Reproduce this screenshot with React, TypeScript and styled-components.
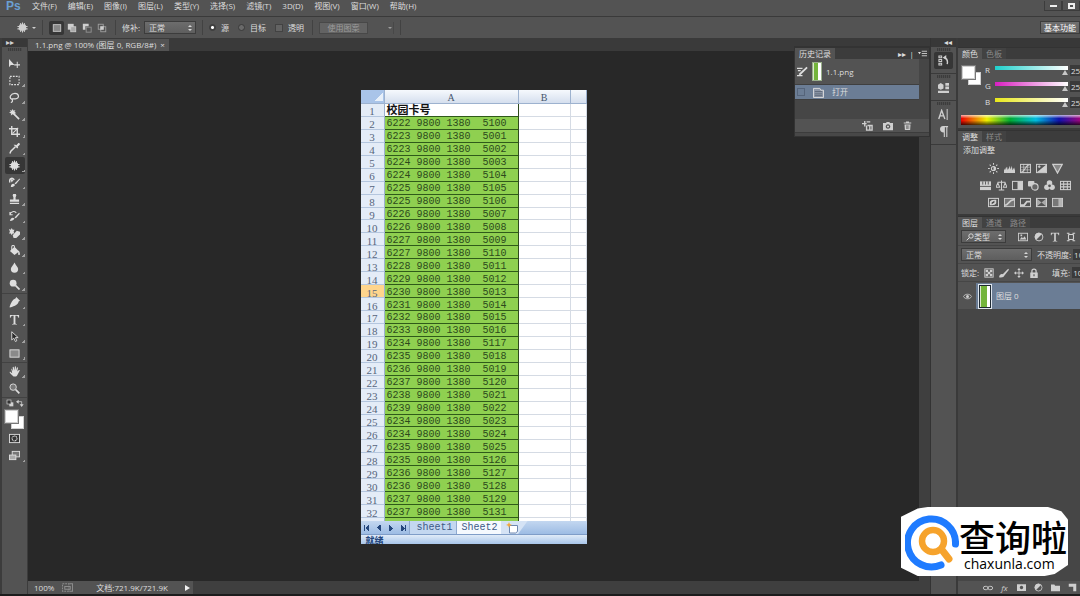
import React from "react";
import styled, { createGlobalStyle, css } from "styled-components";

const Global = createGlobalStyle`
  * { box-sizing: border-box; }
  body { margin: 0; background: #282828; overflow: hidden; }
  body, button, input, select {
    font-family: "Open Sans", "Noto Sans CJK SC", sans-serif;
    font-size: 8px;
    line-height: 10px;
    color: #dedede;
  }
  button, input, select { margin: 0; padding: 0; border: 0; background: none; border-radius: 0; }
`;

const Shell = styled.div`
  display: flex;
  flex-direction: column;
  height: 100vh;
  background: #535353;
  border-bottom: 2px solid #1c1c1c;
  overflow: hidden;
`;

/* ---------- icons ---------- */

const S = { fill: "none", stroke: "currentColor", strokeWidth: 1.1 } as const;
const F = { fill: "currentColor" } as const;

const icons: Record<string, React.ReactNode> = {
  move: <><path {...F} d="M0 1v9l2-2.4h4z" /><path {...S} d="M9 4v7M5.7 7.5h6.6" /></>,
  marquee: <rect {...S} x="1" y="1.5" width="10" height="9" strokeDasharray="2 1.2" />,
  lasso: <path {...S} strokeWidth="1.3" d="M3 8C-.5 6 2 1.500 6.500 1.500S12 7 7 7.500C4 8 2.500 6.500 3.500 8.500S3 11 2 11.500" />,
  wand: <><path {...F} d="M4 0l1 2 2-1-1 2 2 1.500-2 .5 0 2-1.500-1.500L2 7l.5-2L0 4l2-1-1-2 2 1z" /><path {...S} strokeWidth="1.800" d="M5 5l6 6" /></>,
  crop: <><path {...S} strokeWidth="1.500" d="M3 0v9h9M0 3h9v9" /><path {...S} d="M4 8l6-6" /></>,
  eyedropper: <><path {...F} d="M7 2l1 .5L10 .2c1-.8 2.500.8 1.700 1.700L9.500 4l.5 1-1 1-4-4z" /><path {...S} strokeWidth="1.600" d="M7 4L2 9l-1 2.500" /></>,
  patch: <><rect {...F} x="2" y="2.500" width="8" height="7" rx="2.500" /><path {...S} d="M4 1v10M6 .5v11M8 1v10M.5 5h11M.5 7.500h11" /></>,
  healing: <><path {...S} strokeWidth="1.500" d="M1 6C-.5 1 5 0 5.500 3.500" /><path {...F} d="M1 2l4 1-2 3zM2 11c0-4 3-4 4-3s0 3-4 3zM6 7l5.500-5.500.5 1L7.500 8z" /></>,
  stamp: <path {...F} d="M4.500 0h3l.5 1.500-.8 2V6H11v2.500H1V6h3.800V3.500l-.8-2zM1 9.500h10V11H1z" />,
  historyBrush: <><path {...S} d="M1 4C2 0 6 0 8 2M1 1v3h3" /><path {...F} d="M1 11c1-4 3-4 5-3-1 2-2 3-5 3zM6 7l5-5 .8 1L7.500 8z" /></>,
  eraser: <><path {...F} d="M0 1l2 1 1-2 1 2 2 0-1 2 1 2-2 0-1 2-1-2-2 0 1-2z" /><path {...F} d="M4 8l4.500-5 3.500 1v3L8 11H5z" /></>,
  bucket: <><path {...F} d="M1 6.500L6 2l5 5-5 4zM10.500 6c1.500 2 2 5 .5 5s-1-3-.5-5z" /><path {...S} d="M3 6V2c0-2 3-2 3 0v3" /></>,
  drop: <path {...F} d="M6 .5c1 2.500 4 5 4 7.200a4 4 0 0 1-8 0C2 5.500 5 3 6 .5z" />,
  dodge: <><circle {...F} cx="4.500" cy="4.500" r="3.700" /><path {...S} strokeWidth="1.800" d="M7 7l4.500 4.500" /></>,
  pen: <><path {...F} d="M8 0l4 4-1.500 1C10 8 7 10 1 11.500L.5 11 3.500 7.500c-.5-.9.9-1.800 1.500-.9s-.4 1.800-1 1.300L.6 11C2 6 4 2.500 7 1.500z" /></>,
  type: <path {...F} d="M1 1h10v3h-.8C10 2.300 9.300 1.900 7 1.900V10c0 .5.500.8 1.700.9v.6H3.300v-.6C4.500 10.800 5 10.500 5 10V1.900c-2.300 0-3 .4-3.200 2.100H1z" />,
  select: <path fill="#2a2a2a" stroke="currentColor" d="M3 .8v9l2.200-2L7 11.500l1.500-.8L7 7.200l3 0z" />,
  shape: <rect fill="#8a8a8a" stroke="currentColor" x="1" y="2" width="10" height="8" />,
  hand: <path {...F} d="M2.500 3c1-.5 1.500 1.500 2 2.500L4 1.500C4 .5 5.200.5 5.300 1.500L6 5l.3-4c.1-1 1.300-1 1.300 0V5l.9-3c.4-1 1.500-.6 1.300.3L9 6l1.500-1.500c.8-.6 1.500 0 1.100.8L9 10c-.4 1-1 1.500-2.500 1.500S4.500 11 4 10.500L1 7.500c-.8-.9.2-1.500 1-.8L3.500 8z" />,
  zoom: <><circle fill="#777" stroke="currentColor" cx="4.500" cy="4.500" r="3.500" /><path {...S} strokeWidth="1.800" d="M7.300 7.300l4 4" /></>,
  defaults: <><rect {...F} x="5" y="5" width="6" height="6" /><rect fill="#333" stroke="currentColor" x="1.500" y="1.500" width="6" height="6" /></>,
  swap: <><path {...S} d="M2 4h6.500v6" /><path {...F} d="M4 1v6L0 4zM5.500 8h6L8.500 12z" /></>,
  mask: <><rect fill="#333" stroke="currentColor" x=".5" y="1.500" width="11" height="9" /><circle {...S} cx="6" cy="6" r="2.700" strokeDasharray="1.500 .5" /></>,
  screen: <><rect fill="#777" stroke="currentColor" x="3.500" y="1.500" width="8" height="6" /><rect fill="#aaa" stroke="currentColor" x=".5" y="5.500" width="7" height="5" /></>,
  sqNew: <rect fill="#888" stroke="currentColor" x="1.500" y="2" width="9" height="8" />,
  sqAdd: <><rect {...F} x="1" y="1" width="7" height="7" /><rect fill="#aaa" stroke="currentColor" x="4.500" y="4.500" width="6" height="6" /></>,
  sqSub: <><path {...F} d="M1 1h7v3H4v4H1z" /><rect {...S} x="5" y="5" width="6" height="6" opacity=".5" /></>,
  sqInt: <><rect {...S} x="1.500" y="1.500" width="6" height="6" opacity=".6" /><rect {...S} x="4.500" y="4.500" width="6" height="6" opacity=".6" /><path {...F} d="M4 4h4v4H4z" /></>,
  historyPanel: <><path {...S} d="M1 1h3v2H1zM1 5h3v2H1zM1 9h3v2H1z" /><path {...S} strokeWidth="1.500" d="M10 10c1-4 0-6-3-7" /><path {...F} d="M5 3l4-3v5z" /></>,
  miniBridge: <><path {...F} d="M0 3l3-2 3 2v4L3 8.500 0 7zM8 1h4v3H8zM8 5h4v3H8zM0 9.500h12V12H0z" /></>,
  character: <><path {...S} strokeWidth="1.500" d="M.8 11L4 1.500 7.500 11M2 7.500h4" /><path {...S} d="M10 0v12" /></>,
  paragraph: <path {...F} d="M5.500 0H11v1.300h-.8V12H9V1.300H7.500V12H6.300V7C1 7 1 0 5.500 0z" />,
  source: <><path {...S} strokeWidth="1.300" d="M0 2.500h6M1 5h3M0 10.500h6" /><path {...S} strokeWidth="2" d="M2.500 9.500L11 1.500" /></>,
  stateDoc: <><path fill="#8d97a8" stroke="currentColor" d="M.5 11.500v-10h7l1 2h3v8z" /><path stroke="#5b6675" d="M2 5h8M2 7.500h8M2 9.500h8" /></>,
  newDoc: <><path {...S} strokeWidth="1.500" d="M0 4h5M3 1v6M5 2h4M6 6h5v5H5V6M8.500 6v5" /></>,
  camera: <path {...F} fillRule="evenodd" d="M0 2.500h3.500l1-1.200h3l1 1.200H12V11H0zM6 4a2.700 2.700 0 1 0 .01 0zM6 5.300a1.300 1.300 0 1 1-.01 0z" />,
  trash: <path {...F} fillRule="evenodd" d="M1 2h3V.8h4V2h3v1.300H1zM2 4.500h8L9.500 12h-7zM4 5.500v5h.7v-5zM5.700 5.500v5h.7v-5zM7.500 5.500v5h.7v-5z" />,
  brightness: <><circle {...S} cx="6" cy="6" r="2.300" /><path {...F} d="M6 3.700a2.300 2.300 0 0 1 0 4.600z" /><path {...S} d="M6 0v2M6 10v2M0 6h2M10 6h2M1.800 1.800l1.300 1.300M8.900 8.900l1.300 1.300M1.800 10.200l1.300-1.300M8.900 3.100l1.300-1.300" /></>,
  levels: <path {...F} d="M0 11V8l1-2v2l1.500-4L4 8V4l1 3 1.200-4 1 4L8.500 3l.8 5L11 5l1 3v3z" />,
  curves: <><rect {...S} x=".5" y="1.500" width="11" height="9" /><path {...S} strokeWidth=".7" d="M4 1v10M8 1v10M0 4.500h12M0 7.500h12" /><path {...S} d="M1 10c5 0 4-8 10-8" /></>,
  exposure: <><rect {...S} x=".5" y="1.500" width="11" height="9" /><path {...F} d="M1 10L11 2v8z" /><path {...S} d="M2 4h3M3.500 2.500v3" /></>,
  vibrance: <path fill="#888" stroke="currentColor" strokeWidth="1.300" d="M.8 1.500h10.400L6 11z" />,
  hue: <><rect {...F} x="0" y="1.500" width="12" height="9.500" /><path stroke="#555" d="M0 7h12M3 1.500V5M6 1.500V5M9 1.500V5" /></>,
  balance: <><path {...S} d="M6 .5V11M2 2.500h8M3 11h6M0 8l2-5 2 5zM8 8l2-5 2 5z" /></>,
  bw: <><rect {...S} x=".5" y="1.500" width="11" height="9" /><path {...F} d="M6 1.500h5.500v9H6z" /></>,
  photoFilter: <><rect {...F} x="0" y="1" width="7" height="6" rx="1" /><circle fill="#666" stroke="currentColor" strokeWidth="1.300" cx="7.500" cy="7.500" r="3.500" /></>,
  mixer: <><circle {...F} cx="6" cy="3.300" r="3" /><circle {...F} cx="3.200" cy="8" r="3" /><circle {...F} cx="8.800" cy="8" r="3" /><circle cx="6" cy="6.400" r="1.500" fill="#535353" /></>,
  lookup: <><rect {...S} x=".5" y="1.500" width="11" height="9" /><path {...S} d="M0 4.500h12M0 7.500h12M4 1v10M8 1v10" /></>,
  invert: <><rect {...S} x=".5" y="1.500" width="11" height="9" /><path {...F} d="M2 9V6c0-3 4-3 7-3v3c0 3-4 3-7 3z" /><path fill="#444" d="M4 8V6l3-2v2z" /></>,
  posterize: <><rect fill="#777" stroke="currentColor" x=".5" y="1.500" width="11" height="9" /><path {...S} strokeWidth="1.800" d="M1 9c4 0 4-6 10-6" /></>,
  threshold: <><rect {...S} x=".5" y="1.500" width="11" height="9" /><path {...F} d="M1 10V8h3l3-4h4v2H8l-3 4z" /></>,
  selective: <><rect {...S} x=".5" y="1.500" width="11" height="9" /><path {...F} d="M0 1l6 5 6-5v10L6 6l-6 5z" opacity=".7" /></>,
  gradientMap: <><rect fill="#777" stroke="currentColor" x=".5" y="1.500" width="11" height="9" /><path {...F} opacity=".7" d="M7 2h4v8H7z" /></>,
  image: <><rect {...S} x=".5" y="1.500" width="11" height="9" /><path {...F} d="M2 9l2.500-3L6 7.500 8 5l2 4zM3 3h2v2H3z" /></>,
  halfCircle: <><circle {...S} cx="6" cy="6" r="4.700" /><path {...F} d="M9.300 2.700A4.700 4.700 0 1 0 2.700 9.300z" /></>,
  vector: <path {...S} strokeWidth="1.300" d="M3 3h6M3 9h6M3 3v6M9 3v6M1 1.500h2.500V4M8.500 4V1.500H11M1 10.500h2.500V8M8.500 8v2.500H11" />,
  checker: <><rect {...S} x="1" y="1" width="10" height="10" /><path {...F} d="M2 2h3v3H2zM7 2h3v3H7zM4.500 4.500h3v3h-3zM2 7h3v3H2zM7 7h3v3H7z" /></>,
  brush: <path {...F} d="M0 11c1-4 3-4 4.500-3.500L11 1l1 1-5.500 7C6 11 3 12 0 11z" />,
  cross: <><path {...S} d="M6 1v10M1 6h10" /><path {...F} d="M4 2.500L6 0l2 2.500zM4 9.500L6 12l2-2.500zM2.500 4L0 6l2.500 2zM9.500 4L12 6 9.500 8z" /></>,
  lock: <><path {...S} strokeWidth="1.500" d="M3.500 6V3.500c0-3 5-3 5 0V6" /><path {...F} fillRule="evenodd" d="M1.500 5.500h9V12h-9zM5.300 7.500v2.500h1.400V7.500z" /></>,
  eye: <><path {...S} d="M.5 6C3 2 9 2 11.500 6 9 10 3 10 .5 6z" /><circle {...F} cx="6" cy="6" r="2" /></>,
  search: <><circle {...S} strokeWidth="1.400" cx="7.500" cy="4.500" r="3.300" /><path {...S} strokeWidth="1.500" d="M5 7l-4 4" /></>,
  link: <><rect {...S} x=".5" y="4" width="5.500" height="4" rx="2" /><rect {...S} x="6" y="4" width="5.500" height="4" rx="2" /></>,
  layerMask: <path {...F} fillRule="evenodd" d="M0 1.500h12v9H0zM6 3.700a2.300 2.300 0 1 0 .01 0z" />,
  folder: <path {...F} d="M0 2h4.500l1 1.500H12V11H0z" />,
  newLayer: <path {...F} d="M1 1h10v10H7V5H1z" />,
  bridge: <><rect {...S} x=".5" y="2" width="7" height="8" strokeDasharray="2 1" /><path {...S} d="M8 2h3.500v8H8M3 5h6v3H3z" /></>,
  newSheet: <><path fill="#fff" stroke="#6d87b0" d="M3.500 3.500h8v6l-2 1.500h-6z" /><path fill="#f4a73c" d="M3 0l.8 2L6 3l-2.200.8L3 6l-.8-2.200L0 3l2.200-1z" /></>,
  panelMenu: <><path {...F} d="M0 4h4L2 7z" /><path {...S} d="M5 3h7M5 6h7M5 9h7" /></>,
};

const Svg = styled.svg`
  display: block;
  flex: none;
`;

const Icon = ({ name, size = 11 }: { name: string; size?: number }) => (
  <Svg width={size} height={size} viewBox="0 0 12 12" aria-hidden="true">{icons[name]}</Svg>
);

/* ---------- menu and option bars ---------- */

const MenuBar = styled.header`
  display: flex;
  align-items: center;
  height: 17px;
  padding: 0 0 4px 6px;
  flex: none;
  border-bottom: 1px solid #3a3a3a;
`;

const Brand = styled.div`
  width: 26px;
  font-family: "Liberation Sans", sans-serif;
  font-size: 12px;
  line-height: 12px;
  font-weight: 700;
  color: #6b9fd2;
`;

const MenuList = styled.nav`
  display: flex;
  gap: 11px;
`;

const MenuItem = styled.button`
  white-space: nowrap;
`;

const WindowButtons = styled.div`
  display: flex;
  margin-left: auto;
`;

const WindowButton = styled.button`
  display: grid;
  place-items: center;
  width: 18px;
  height: 10px;
  border: 1px solid #3c3c3c;
  border-top: 0;
`;

const WindowGlyph = styled.span<{ $open?: boolean }>`
  width: 7px;
  height: ${(p) => (p.$open ? 6 : 2)}px;
  ${(p) => (p.$open ? "border: 2px solid #eee;" : "background: #eee;")}
`;

const OptionsBar = styled.div`
  display: flex;
  align-items: center;
  height: 21px;
  padding-left: 15px;
  flex: none;
  white-space: nowrap;
`;

const Divider = styled.span`
  width: 1px;
  height: 15px;
  margin: 0 6px;
  background: #424242;
`;

const IconButton = styled.button<{ $active?: boolean }>`
  display: grid;
  place-items: center;
  flex: none;
  width: 15px;
  height: 14px;
  color: #cfcfcf;
  ${(p) => p.$active && css`background: #363636; border-radius: 2px;`}
`;

const Caret = styled.span`
  width: 0;
  height: 0;
  margin-left: 2px;
  border: 2px solid transparent;
  border-top-color: #cfcfcf;
  border-bottom-width: 0;
`;

const SelectBox = styled.span<{ $w: number }>`
  display: flex;
  align-items: center;
  flex: none;
  width: ${(p) => p.$w}px;
  height: 13px;
  padding: 0 3px 0 4px;
  border: 1px solid #3c3c3c;
  background: linear-gradient(#6d6d6d, #5e5e5e);
`;

const Select = styled.select`
  flex: 1;
  min-width: 0;
  appearance: none;
  outline: 0;
`;

const Spin = styled.span`
  display: grid;
  gap: 2px;
  &::before, &::after {
    content: "";
    border: 2px solid transparent;
    border-top: 0;
    border-bottom: 2px solid #d8d8d8;
  }
  &::after { transform: rotate(180deg); }
`;

const Choice = styled.label<{ $gap: number }>`
  display: flex;
  align-items: center;
  gap: 5px;
  margin-right: ${(p) => p.$gap}px;
`;

const Radio = styled.input`
  appearance: none;
  width: 7px;
  height: 7px;
  border: 1px solid #3a3a3a;
  border-radius: 50%;
  background: #6a6a6a;
  &:checked { background: radial-gradient(#fff 0 1px, #444 2px); }
`;

const Tick = styled.input`
  appearance: none;
  width: 8px;
  height: 8px;
  border: 1px solid #424242;
  background: #636363;
`;

const PatternButton = styled.button`
  width: 49px;
  height: 12px;
  border: 1px solid #484848;
  background: #636363;
  color: #9c9c9c;
`;

const PatternMenu = styled.button`
  display: flex;
  align-items: center;
  justify-content: flex-end;
  width: 26px;
  height: 12px;
  padding-right: 1px;
  border-right: 1px solid #424242;
  opacity: 0.6;
`;

const WorkspaceButton = styled.button`
  width: 40px;
  height: 13px;
  margin-left: auto;
  border: 1px solid #3c3c3c;
  background: linear-gradient(#707070, #606060);
  color: #fff;
  white-space: nowrap;
`;

/* ---------- workspace ---------- */

const Workspace = styled.div`
  display: flex;
  flex: 1;
  min-height: 0;
`;

const Collapse = styled.div<{ $end?: boolean }>`
  height: 9px;
  padding: 0 4px;
  flex: none;
  font-size: 8px;
  line-height: 8px;
  background: #383838;
  text-align: ${(p) => (p.$end ? "right" : "left")};
`;

const Grip = styled.div`
  width: 14px;
  height: 3px;
  margin: 1px auto;
  flex: none;
  background: repeating-linear-gradient(90deg, #3c3c3c 0 1px, #4c4c4c 1px 2px);
`;

const ToolColumn = styled.aside`
  display: flex;
  flex-direction: column;
  width: 28px;
  flex: none;
  border-left: 2px solid #3c3c3c;
  border-right: 1px solid #3c3c3c;
  color: #d2d2d2;
`;

const ToolGroup = styled.div<{ $first?: boolean; $last?: boolean }>`
  display: flex;
  flex-direction: column;
  align-items: center;
  ${(p) => p.$first && "padding-top: 3px;"}
  ${(p) => (p.$last ? "padding-top: 1px;" : "border-bottom: 1px solid #424242;")}
`;

const Tool = styled.button<{ $active?: boolean; $menu?: boolean }>`
  display: grid;
  place-items: center;
  width: 20px;
  height: 17px;
  ${(p) => p.$active && css`background-color: #363636; border-radius: 2px;`}
  ${(p) => p.$menu && css`
    background-image: linear-gradient(135deg, transparent 50%, #a0a0a0 50%);
    background-size: 3px 3px;
    background-position: 17px 12px;
    background-repeat: no-repeat;
  `}
`;

const MiniRow = styled.div`
  display: flex;
  justify-content: space-between;
  width: 18px;
  margin: 1px auto 3px;
`;

const Swatches = styled.div`
  display: grid;
  flex: none;
  width: 19px;
  height: 19px;
  margin: 0 auto;
`;

const Swatch = styled.button<{ $front?: boolean }>`
  grid-area: 1 / 1;
  width: 13px;
  height: 13px;
  background: #fff;
  border: 1px solid #d0d0d0;
  ${(p) => (p.$front ? "z-index: 1; box-shadow: 0 0 0 1px #777;" : "place-self: end;")}
`;

const Document = styled.main`
  position: relative;
  display: flex;
  flex-direction: column;
  flex: 1;
  min-width: 0;
  background: #3f3f3f;
`;

const TabStrip = styled.div`
  height: 13px;
  padding-top: 1px;
  flex: none;
  background: #3a3a3a;
`;

const DocTab = styled.div`
  display: inline-flex;
  align-items: center;
  gap: 4px;
  height: 12px;
  padding: 0 4px 0 7px;
  background: #535353;
  white-space: nowrap;
`;

const Canvas = styled.div`
  display: flex;
  justify-content: center;
  align-items: center;
  flex: 1;
  min-height: 0;
  margin-right: 11px;
  padding-top: 2px;
  background: #282828;
`;

const StatusBar = styled.footer`
  display: flex;
  align-items: center;
  width: 165px;
  height: 13px;
  padding: 0 3px 0 6px;
  flex: none;
  background: #535353;
  white-space: nowrap;
  > :nth-child(2) { margin: 0 23px 0 8px; color: #8d8d8d; }
  > :last-child { margin-left: auto; }
`;

const PlayMark = styled.button`
  width: 0;
  height: 0;
  border: 3px solid transparent;
  border-left: 5px solid #f2f2f2;
  border-right: 0;
`;

/* ---------- spreadsheet image ---------- */

const Sheet = styled.section`
  width: 226px;
  background: #fff;
  overflow: hidden;
`;

const GridView = styled.div`
  height: 431px;
  overflow: hidden;
`;

const Grid = styled.table`
  width: 100%;
  height: 441px;
  table-layout: fixed;
  border-collapse: separate;
  border-spacing: 0;
  font-family: "Liberation Mono", "Noto Sans CJK SC", monospace;
  font-size: 10px;
  line-height: 8px;
  color: #2c4a1c;
  td, th { padding: 3px 0 0; font-weight: 400; white-space: pre; }
`;

const ColHead = styled.th<{ $corner?: boolean }>`
  height: 14px;
  color: #44546c;
  font-family: "Liberation Serif", serif;
  border-right: 1px solid #9db2cf;
  border-bottom: 1px solid #9db2cf;
  background: ${(p) =>
    p.$corner
      ? "linear-gradient(135deg, transparent 50%, #e8f0fa 50%) 14px 3px / 8px 8px no-repeat, #a9c4e9"
      : "linear-gradient(#f6f9fd, #d5dfee)"};
`;

const RowHead = styled.th<{ $on: boolean }>`
  font-family: "Liberation Serif", serif;
  font-size: 11px;
  color: #56657c;
  text-align: center;
  border-right: 1px solid #9db2cf;
  border-bottom: 1px solid #b4c6de;
  background: ${(p) => (p.$on ? "#ffd58d" : "#e4ecf7")};
`;

const DataCell = styled.td<{ $title?: boolean }>`
  border-right: 1px solid #2f4a1c;
  border-bottom: 1px solid #2f5a1a;
  background: #8fd050;
  && { padding-left: 2px; }
  ${(p) => p.$title && css`
    background: #fff;
    color: #111;
    font-size: 11px;
    && { font-weight: 700; }
  `}
`;

const BlankCell = styled.td`
  border-right: 1px solid #d5dbe4;
  border-bottom: 1px solid #d5dbe4;
`;

const SheetTabs = styled.div`
  display: flex;
  align-items: center;
  height: 13px;
  background: linear-gradient(#c3d7f0, #9dbce4);
  font-family: "Liberation Mono", monospace;
  font-size: 10px;
  line-height: 13px;
  color: #3c5a86;
`;

const SheetNav = styled.button<{ $back?: boolean; $bar?: boolean }>`
  width: 12px;
  height: 6px;
  background:
    ${(p) => (p.$bar ? `linear-gradient(#24467c, #24467c) ${p.$back ? 3 : 8}px 0 / 1px 6px no-repeat,` : "")}
    conic-gradient(from ${(p) => (p.$back ? 45 : 225)}deg at ${(p) => (p.$back ? "0" : "100%")} 50%, #24467c 90deg, transparent 0) 4px 0 / 4px 6px no-repeat;
`;

const SheetTab = styled.button<{ $on?: boolean }>`
  height: 13px;
  padding: ${(p) => (p.$on ? "0 3px 0 5px" : "0 3px 0 7px")};
  font: inherit;
  color: inherit;
  border-left: 1px solid #8ea9cf;
  background: ${(p) => (p.$on ? "#f5f9fe" : "#c3d7f0")};
`;

const SheetEnd = styled.span`
  width: 27px;
  height: 13px;
  padding: 1px 0 0 5px;
  background: #d5e3f5;
  clip-path: polygon(0 0, 100% 0, 65% 100%, 0 100%);
`;

const SheetStatus = styled.div`
  height: 10px;
  padding: 1px 0 0 5px;
  background: linear-gradient(#e0ebf8, #a9c6ea);
  border-top: 1px solid #7f9dc8;
  color: #24467c;
  font-weight: 700;
  font-size: 9px;
  line-height: 9px;
`;

/* ---------- panels ---------- */

const PanelTabs = styled.div`
  display: flex;
  height: 12px;
  flex: none;
  background: #3c3c3c;
  border-top: 1px solid #333;
`;

const PanelTab = styled.button<{ $on?: boolean }>`
  padding: 0 4px;
  white-space: nowrap;
  background: ${(p) => (p.$on ? "#535353" : "#424242")};
  color: ${(p) => (p.$on ? "#dedede" : "#8a8a8a")};
`;

const PanelTools = styled.span`
  display: flex;
  align-items: center;
  gap: 4px;
  margin-left: auto;
  padding-right: 2px;
`;

const HistoryPanel = styled.section`
  position: absolute;
  top: 8px;
  right: 0;
  width: 136px;
  height: 91px;
  display: flex;
  flex-direction: column;
  background: #464646;
  border: 1px solid #333;
`;

const HistoryRow = styled.button<{ $on?: boolean }>`
  display: flex;
  align-items: center;
  gap: ${(p) => (p.$on ? 8 : 4)}px;
  height: ${(p) => (p.$on ? 15 : 26)}px;
  margin-right: 10px;
  padding-left: 2px;
  text-align: left;
  background: ${(p) => (p.$on ? "#6b7d95" : "#535353")};
  border-bottom: 1px solid #3f3f3f;
`;

const StateBox = styled.span`
  width: 8px;
  height: 8px;
  border: 1px solid #55647a;
`;

const Thumb = styled.span<{ $framed?: boolean }>`
  width: ${(p) => (p.$framed ? 12 : 10)}px;
  height: ${(p) => (p.$framed ? 23 : 19)}px;
  flex: none;
  border: ${(p) => (p.$framed ? "1px solid #1f2a33" : "1px solid #9ab08a")};
  outline: ${(p) => (p.$framed ? "1px solid #dfe6ee" : "0")};
  background: linear-gradient(90deg, #dce9cf 0 12%, #74b53c 12% 68%, #fff 68%);
`;

const PanelFooter = styled.div<{ $gap: number; $end: number }>`
  display: flex;
  align-items: center;
  justify-content: flex-end;
  gap: ${(p) => p.$gap}px;
  height: 13px;
  padding-right: ${(p) => p.$end}px;
  flex: none;
  margin-top: auto;
  background: #535353;
  color: #cfcfcf;
`;

const FooterIcon = styled.button`
  display: grid;
  place-items: center;
  width: 11px;
  height: 12px;
  color: inherit;
  font-style: italic;
`;

const FloatGrip = styled.div`
  height: 4px;
  flex: none;
  background: #484848;
  border-top: 1px solid #3c3c3c;
`;

const Dock = styled.aside`
  display: flex;
  width: 150px;
  flex: none;
  border-left: 1px solid #333;
`;

const DockStrip = styled.div`
  width: 25px;
  flex: none;
`;

const StripGroup = styled.div`
  display: flex;
  flex-direction: column;
  align-items: center;
  padding-bottom: 4px;
  border-bottom: 1px solid #3a3a3a;
`;

const StripButton = styled(IconButton)`
  width: 19px;
  height: 17px;
`;

const Panels = styled.div`
  display: flex;
  flex-direction: column;
  flex: 1;
  min-width: 0;
  overflow: hidden;
  border-left: 2px solid #3a3a3a;
`;

const ColorBody = styled.div`
  display: grid;
  grid-template-columns: 20px 1fr;
  align-items: start;
  gap: 0 2px;
  padding: 3px 0 3px 3px;
  border-bottom: 2px solid #3a3a3a;
`;

const SwatchPad = styled.div`
  padding-top: 4px;
`;

const ChannelRow = styled.label`
  display: grid;
  grid-template-columns: 10px 73px 1fr;
  align-items: center;
  height: 16px;
  padding-left: 2px;
`;

const Range = styled.input<{ $c: string }>`
  appearance: none;
  width: 73px;
  height: 10px;
  background: linear-gradient(90deg, ${(p) => p.$c}, #fff) 0 1px / 73px 4px no-repeat;
  &::-webkit-slider-thumb {
    appearance: none;
    width: 6px;
    height: 5px;
    margin-top: 5px;
    background: #c8c8c8;
    clip-path: polygon(50% 0, 100% 100%, 0 100%);
  }
`;

const NumberBox = styled.input`
  width: 20px;
  height: 11px;
  margin-left: 2px;
  padding-left: 1px;
  flex: none;
  background: #3a3a3a;
`;

const Spectrum = styled.div`
  grid-column: 1 / -1;
  height: 10px;
  margin-top: 5px;
  background:
    linear-gradient(rgba(255, 255, 255, 0.7), transparent 35%, transparent 55%, rgba(0, 0, 0, 0.7)),
    linear-gradient(90deg, #e00 0, #ee0 20%, #0a3 38%, #0bd 58%, #11a 76%, #d06 100%);
`;

const AdjustBody = styled.div`
  display: flex;
  flex-direction: column;
  padding: 3px 0 3px 5px;
  border-bottom: 2px solid #3a3a3a;
`;

const AdjustTitle = styled.span`
  margin-bottom: 5px;
`;

const AdjustRow = styled.div<{ $indent: number }>`
  display: flex;
  gap: 1px;
  height: 17px;
  align-items: center;
  padding-left: ${(p) => p.$indent}px;
`;

const LayerRow = styled.div<{ $gap: number }>`
  display: flex;
  align-items: center;
  gap: ${(p) => p.$gap}px;
  height: 18px;
  padding-left: 3px;
  flex: none;
  white-space: nowrap;
  background: #535353;
  border-bottom: 1px solid #464646;
`;

const Pad = styled.label<{ $l?: number }>`
  display: flex;
  align-items: center;
  margin-left: ${(p) => p.$l ?? 4}px;
`;

const LayerItem = styled.div`
  display: flex;
  align-items: center;
  height: 26px;
  flex: none;
  margin-top: 1px;
  background: #6b7d95;
`;

const LayerEye = styled.button`
  display: grid;
  place-items: center;
  width: 18px;
  height: 26px;
  margin-right: 3px;
  background: #535353;
  color: #cfcfcf;
`;

const LayerName = styled.span`
  margin-left: 5px;
`;

const LayerSpace = styled.div`
  flex: 1;
  background: #464646;
`;

/* ---------- site badge ---------- */

const Badge = styled.a`
  position: absolute;
  right: 12px;
  bottom: 20px;
  display: flex;
  align-items: center;
  width: 167px;
  height: 69px;
  padding-left: 4px;
  background: #fff;
  color: #000;
  text-decoration: none;
  clip-path: polygon(10% 2%, 16% 0, 88% 0, 96% 6%, 100% 18%, 100% 84%, 92% 97%, 86% 100%, 10% 100%, 0 88%, 0 14%);
`;

const BadgeText = styled.span`
  display: flex;
  flex-direction: column;
  padding-top: 4px;
`;

const BadgeName = styled.span`
  font: 500 36px/40px "Noto Sans CJK SC", sans-serif;
  white-space: nowrap;
`;

const BadgeHost = styled.span`
  padding-left: 5px;
  font-size: 14px;
  line-height: 16px;
`;

const menus = ["文件(F)", "编辑(E)", "图像(I)", "图层(L)", "类型(Y)", "选择(S)", "滤镜(T)", "3D(D)", "视图(V)", "窗口(W)", "帮助(H)"];

const toolGroups = [
  ["move", "marquee", "lasso", "wand", "crop", "eyedropper", "patch", "healing", "stamp", "historyBrush", "eraser", "bucket", "drop", "dodge"],
  ["pen", "type", "select", "shape"],
  ["hand", "zoom"],
];

const plainTools = ["move", "zoom"];

const cards: [string, string][] = [
  ["6222", "5100"], ["6223", "5001"], ["6223", "5002"], ["6224", "5003"], ["6224", "5104"], ["6225", "5105"],
  ["6225", "5106"], ["6226", "5007"], ["6226", "5008"], ["6227", "5009"], ["6227", "5110"], ["6228", "5011"],
  ["6229", "5012"], ["6230", "5013"], ["6231", "5014"], ["6232", "5015"], ["6233", "5016"], ["6234", "5117"],
  ["6235", "5018"], ["6236", "5019"], ["6237", "5120"], ["6238", "5021"], ["6239", "5022"], ["6234", "5023"],
  ["6234", "5024"], ["6235", "5025"], ["6235", "5126"], ["6236", "5127"], ["6236", "5128"], ["6237", "5129"],
  ["6237", "5131"], ["6238", "5132"],
];

const channels = [["R", "#1fd0cc"], ["G", "#d81fc0"], ["B", "#e8e81a"]];

const adjustments: [number, string[]][] = [
  [23, ["brightness", "levels", "curves", "exposure", "vibrance"]],
  [15, ["hue", "balance", "bw", "photoFilter", "mixer", "lookup"]],
  [23, ["invert", "posterize", "threshold", "selective", "gradientMap"]],
];

export default function App() {
  return (
    <Shell>
      <Global />
      <MenuBar>
        <Brand>Ps</Brand>
        <MenuList>
          {menus.map((m) => <MenuItem key={m}>{m}</MenuItem>)}
        </MenuList>
        <WindowButtons>
          <WindowButton aria-label="最小化"><WindowGlyph /></WindowButton>
          <WindowButton aria-label="最大化"><WindowGlyph $open /></WindowButton>
        </WindowButtons>
      </MenuBar>

      <OptionsBar>
        <IconButton aria-label="修补工具"><Icon name="patch" /></IconButton>
        <Caret />
        <Divider />
        <IconButton $active aria-label="新选区"><Icon name="sqNew" size={10} /></IconButton>
        <IconButton aria-label="添加到选区"><Icon name="sqAdd" size={10} /></IconButton>
        <IconButton aria-label="从选区减去"><Icon name="sqSub" size={10} /></IconButton>
        <IconButton aria-label="与选区交叉"><Icon name="sqInt" size={10} /></IconButton>
        <Divider />
        <label htmlFor="patch-mode">修补:</label>
        <Pad as="span">
          <SelectBox $w={52}>
            <Select id="patch-mode"><option>正常</option></Select>
            <Spin />
          </SelectBox>
        </Pad>
        <Divider />
        <Choice $gap={9}><Radio type="radio" name="origin" defaultChecked />源</Choice>
        <Choice $gap={9}><Radio type="radio" name="origin" />目标</Choice>
        <Choice $gap={2}><Tick type="checkbox" />透明</Choice>
        <Divider />
        <PatternButton>使用图案</PatternButton>
        <PatternMenu aria-label="图案"><Caret /></PatternMenu>
        <Divider />
        <WorkspaceButton>基本功能</WorkspaceButton>
      </OptionsBar>

      <Workspace>
        <ToolColumn>
          <Collapse>▸▸</Collapse>
          <Grip />
          {toolGroups.map((group, i) => (
            <ToolGroup key={i} $first={i === 0}>
              {group.map((t) => (
                <Tool key={t} $menu={!plainTools.includes(t)} $active={t === "patch"} aria-label={t}><Icon name={t} /></Tool>
              ))}
            </ToolGroup>
          ))}
          <MiniRow><Icon name="defaults" size={8} /><Icon name="swap" size={8} /></MiniRow>
          <Swatches>
            <Swatch $front aria-label="前景色" />
            <Swatch aria-label="背景色" />
          </Swatches>
          <ToolGroup $last>
            <Tool aria-label="mask"><Icon name="mask" /></Tool>
            <Tool $menu aria-label="screen"><Icon name="screen" /></Tool>
          </ToolGroup>
        </ToolColumn>

        <Document>
          <TabStrip>
            <DocTab>1.1.png @ 100% (图层 0, RGB/8#)<button aria-label="关闭">×</button></DocTab>
          </TabStrip>
          <Canvas>
            <Sheet>
              <GridView>
                <Grid>
                  <colgroup>
                    <col width="24" /><col width="134" /><col width="52" /><col />
                  </colgroup>
                  <thead>
                    <tr><ColHead $corner /><ColHead>A</ColHead><ColHead>B</ColHead><ColHead /></tr>
                  </thead>
                  <tbody>
                    <tr><RowHead $on={false}>1</RowHead><DataCell $title>校园卡号</DataCell><BlankCell /><BlankCell /></tr>
                    {cards.map(([a, b], i) => (
                      <tr key={i}>
                        <RowHead $on={i + 2 === 15}>{i + 2}</RowHead>
                        <DataCell>{`${a} 9800 1380  ${b}`}</DataCell>
                        <BlankCell /><BlankCell />
                      </tr>
                    ))}
                  </tbody>
                </Grid>
              </GridView>
              <SheetTabs>
                <SheetNav $back $bar aria-label="first" />
                <SheetNav $back aria-label="previous" />
                <SheetNav aria-label="next" />
                <SheetNav $bar aria-label="last" />
                <SheetTab>sheet1</SheetTab>
                <SheetTab $on>Sheet2</SheetTab>
                <SheetEnd><Icon name="newSheet" size={12} /></SheetEnd>
              </SheetTabs>
              <SheetStatus>就绪</SheetStatus>
            </Sheet>
          </Canvas>
          <StatusBar>
            <span>100%</span>
            <Icon name="bridge" />
            <span>文档:721.9K/721.9K</span>
            <PlayMark aria-label="状态" />
          </StatusBar>

          <HistoryPanel>
            <PanelTabs>
              <PanelTab $on>历史记录</PanelTab>
              <PanelTools>▸▸ <span>|</span><Icon name="panelMenu" size={9} /></PanelTools>
            </PanelTabs>
            <HistoryRow><Icon name="source" /><Thumb />1.1.png</HistoryRow>
            <HistoryRow $on><StateBox /><Icon name="stateDoc" />打开</HistoryRow>
            <PanelFooter $gap={9} $end={16}>
              <FooterIcon aria-label="新文档"><Icon name="newDoc" /></FooterIcon>
              <FooterIcon aria-label="新快照"><Icon name="camera" size={10} /></FooterIcon>
              <FooterIcon aria-label="删除"><Icon name="trash" size={9} /></FooterIcon>
            </PanelFooter>
            <FloatGrip />
          </HistoryPanel>
        </Document>

        <Dock>
          <DockStrip>
            <Collapse $end>◂◂</Collapse>
            <StripGroup>
              <Grip />
              <StripButton $active aria-label="历史记录"><Icon name="historyPanel" /></StripButton>
            </StripGroup>
            <StripGroup>
              <Grip />
              <StripButton aria-label="属性"><Icon name="miniBridge" /></StripButton>
            </StripGroup>
            <StripGroup>
              <Grip />
              <StripButton aria-label="字符"><Icon name="character" /></StripButton>
              <StripButton aria-label="段落"><Icon name="paragraph" /></StripButton>
            </StripGroup>
          </DockStrip>
          <Panels>
            <Collapse />
            <PanelTabs><PanelTab $on>颜色</PanelTab><PanelTab>色板</PanelTab></PanelTabs>
            <ColorBody>
              <SwatchPad>
                <Swatches><Swatch $front aria-label="前景" /><Swatch aria-label="背景" /></Swatches>
              </SwatchPad>
              <div>
                {channels.map(([n, c]) => (
                  <ChannelRow key={n}>
                    {n}
                    <Range $c={c} type="range" min={0} max={255} defaultValue={255} />
                    <NumberBox aria-label={n} defaultValue="255" />
                  </ChannelRow>
                ))}
              </div>
              <Spectrum />
            </ColorBody>
            <PanelTabs><PanelTab $on>调整</PanelTab><PanelTab>样式</PanelTab></PanelTabs>
            <AdjustBody>
              <AdjustTitle>添加调整</AdjustTitle>
              {adjustments.map(([indent, names]) => (
                <AdjustRow key={names[0]} $indent={indent}>
                  {names.map((n) => <IconButton key={n} aria-label={n}><Icon name={n} /></IconButton>)}
                </AdjustRow>
              ))}
            </AdjustBody>
            <PanelTabs><PanelTab $on>图层</PanelTab><PanelTab>通道</PanelTab><PanelTab>路径</PanelTab></PanelTabs>
            <LayerRow $gap={1}>
              <SelectBox $w={45}>
                <Icon name="search" size={8} />
                <Select aria-label="类型"><option>类型</option></Select>
                <Spin />
              </SelectBox>
              <Pad as="div" $l={7} />
              {["image", "halfCircle", "type", "vector"].map((n) => (
                <IconButton key={n} aria-label={n}><Icon name={n} size={10} /></IconButton>
              ))}
            </LayerRow>
            <LayerRow $gap={0}>
              <SelectBox $w={71}>
                <Select aria-label="混合模式"><option>正常</option></Select>
                <Spin />
              </SelectBox>
              <Pad $l={5}>不透明度:<NumberBox defaultValue="100%" /></Pad>
            </LayerRow>
            <LayerRow $gap={0}>
              锁定:
              <Pad as="div" $l={2}>
                {["checker", "brush", "cross", "lock"].map((n) => (
                  <IconButton key={n} aria-label={n}><Icon name={n} size={10} /></IconButton>
                ))}
              </Pad>
              <Pad $l={11}>填充:<NumberBox defaultValue="100%" /></Pad>
            </LayerRow>
            <LayerItem>
              <LayerEye aria-label="可见"><Icon name="eye" size={9} /></LayerEye>
              <Thumb $framed />
              <LayerName>图层 0</LayerName>
            </LayerItem>
            <LayerSpace />
            <PanelFooter $gap={6} $end={2}>
              <FooterIcon aria-label="链接"><Icon name="link" size={10} /></FooterIcon>
              <FooterIcon>fx</FooterIcon>
              <FooterIcon aria-label="蒙版"><Icon name="layerMask" size={9} /></FooterIcon>
              <FooterIcon aria-label="调整图层"><Icon name="halfCircle" size={9} /></FooterIcon>
              <FooterIcon aria-label="组"><Icon name="folder" size={9} /></FooterIcon>
              <FooterIcon aria-label="新图层"><Icon name="newLayer" size={9} /></FooterIcon>
            </PanelFooter>
          </Panels>
        </Dock>
      </Workspace>

      <Badge href="#chaxunla">
        <Svg width="54" height="58" viewBox="0 0 54 58" aria-hidden="true">
          <path d="M36 52A24 24 0 1 1 50.500 31" fill="none" stroke="#1f7bff" strokeWidth="7" strokeLinecap="round" />
          <circle cx="28" cy="28" r="11" fill="none" stroke="#f6a32c" strokeWidth="6.500" />
          <path d="M37 37l7 9" fill="none" stroke="#f6a32c" strokeWidth="7" strokeLinecap="round" />
        </Svg>
        <BadgeText>
          <BadgeName>查询啦</BadgeName>
          <BadgeHost>chaxunla.com</BadgeHost>
        </BadgeText>
      </Badge>
    </Shell>
  );
}
